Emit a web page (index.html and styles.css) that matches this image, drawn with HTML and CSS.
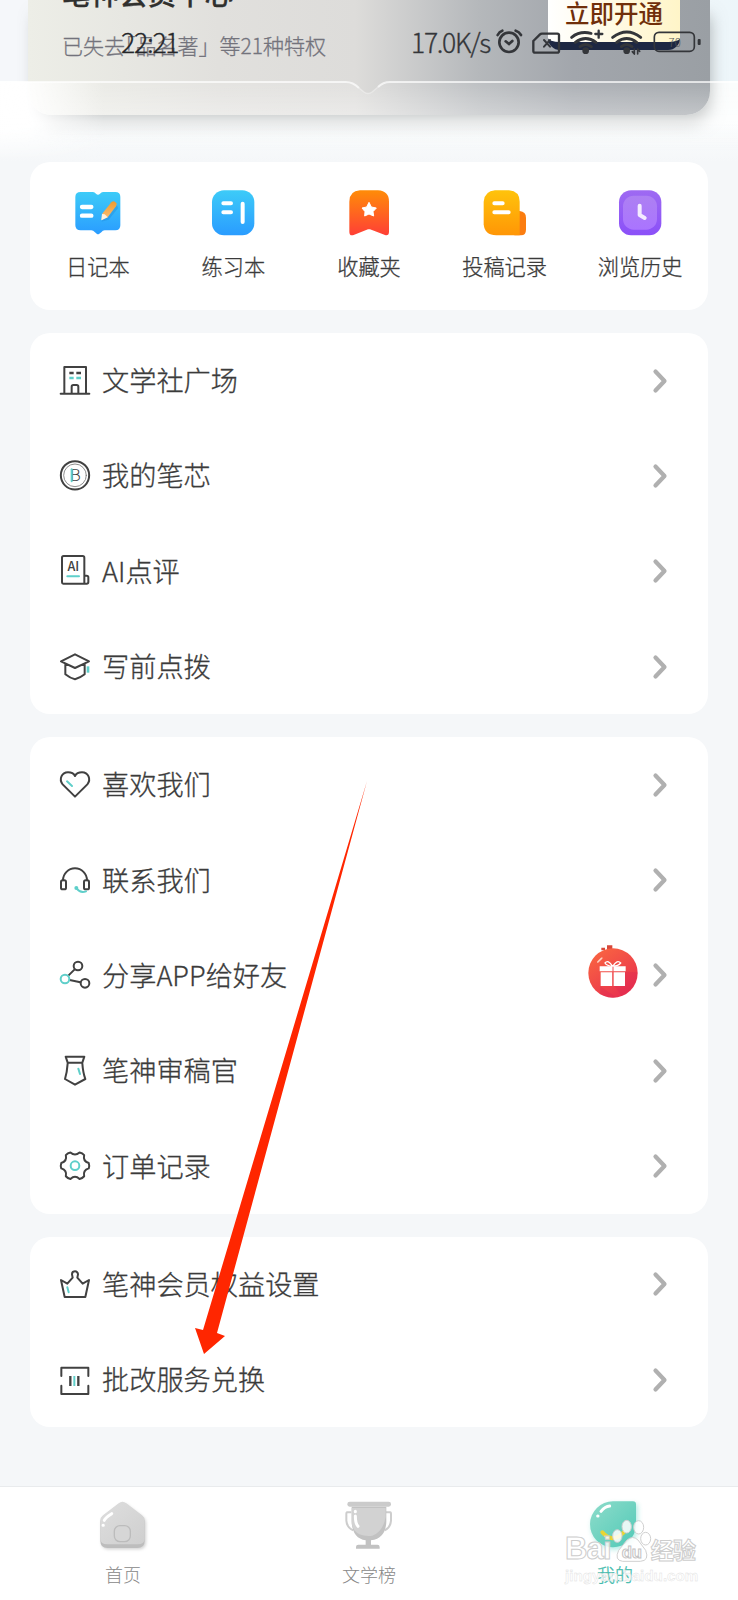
FILE: index.html
```html
<!DOCTYPE html>
<html lang="zh-CN">
<head>
<meta charset="utf-8">
<title>我的</title>
<link rel="stylesheet" href="styles.css">
</head>
<body>
<div class="screen">
  <header class="hero">
    <div class="member">
      <div class="member-title">笔神会员中心</div>
      <div class="member-sub"><span class="tight">已失去「品名著</span>」等21种特权</div>
      <div class="member-btn">立即开通</div>
    </div>
    <svg class="veil" viewBox="0 0 738 80">
      <defs>
        <linearGradient id="veil" x1="0" y1="0" x2="0" y2="1"><stop offset="0" stop-color="#fff" stop-opacity=".12"/><stop offset=".42" stop-color="#fff" stop-opacity=".4"/><stop offset=".5" stop-color="#fff" stop-opacity=".5"/><stop offset="1" stop-color="#f5f7fa" stop-opacity="0"/></linearGradient>
        <linearGradient id="edge" x1="0" y1="0" x2="1" y2="0"><stop offset="0" stop-color="#fff"/><stop offset=".08" stop-color="#fff" stop-opacity=".9"/><stop offset=".3" stop-color="#fff" stop-opacity="0"/></linearGradient>
      </defs>
      <path fill="url(#veil)" d="M0 1H346Q353 1 359 7L364 11Q368 14 372 11L378 6Q383 1 390 1H738V80H0Z"/>
      <path fill="url(#edge)" d="M0 1H346V80H0Z"/>
      <path fill="none" stroke="#fff" stroke-opacity=".7" stroke-width="2" d="M0 1H346Q353 1 359 7M378 6Q383 1 390 1H738"/>
      <path fill="none" stroke="#fff" stroke-opacity=".35" stroke-width="1.500" d="M359 7L364 11Q368 14 372 11L378 6"/>
    </svg>
    <div class="status">
      <span class="time">22:21</span>
      <span class="speed">17.0K/s</span>
      <svg class="status-icons" viewBox="0 0 618 84">
        <g fill="none" stroke="#34363a" stroke-width="8" stroke-linecap="round">
          <circle cx="39" cy="43" r="29"/><path d="M29 40L39 48L49 39M5 21Q10 11 19 8M59 8Q69 11 75 21"/>
          <path stroke-width="7" d="M112 39L132 19Q134 17 138 17H184Q189 17 189 22V69Q189 74 184 74H117Q112 74 112 69Z"/><path stroke-width="6" d="M144 36L162 56M162 36L144 56"/>
          <path stroke-width="9" d="M227 28Q252 8 285 16M238 43Q269 20 300 43M252 56Q269 43 286 56M350 28Q393 -4 434 28M362 43Q392 20 422 43M376 56Q392 43 408 56"/>
          <path stroke-width="7" d="M298 18H319M308 8V29"/><path stroke-width="5" d="M415 63V78M425 63V78M409 71L415 78M431 70L425 64"/>
          <rect x="475" y="13" width="120" height="57" rx="14" stroke-width="5"/>
        </g>
        <g fill="#34363a"><circle cx="269" cy="68" r="10"/><circle cx="392" cy="68" r="10"/><rect x="605" y="33" width="9" height="18" rx="3"/></g>
        <text class="battery" x="536" y="57" text-anchor="middle">70</text>
      </svg>
    </div>
  </header>

  <main class="cards">
    <section class="card shortcuts">
      <div class="shortcut">
        <svg viewBox="0 0 144 144">
          <defs><linearGradient id="sky" x1="0" y1="0" x2="0" y2="1"><stop stop-color="#3dcbf8"/><stop offset="1" stop-color="#2a9cff"/></linearGradient><linearGradient id="pen" x1="0" y1="0" x2="0" y2="1"><stop stop-color="#ef9b2c"/><stop offset="1" stop-color="#fcc07a"/></linearGradient></defs>
          <path fill="url(#sky)" d="M20 9H57Q62 9 66 14Q72 20 78 14Q82 9 87 9H124Q139 9 139 24V109Q139 124 124 124H92Q86 124 82 130L75 135Q72 137 69 135L62 129Q58 124 52 124H20Q4 124 4 109V24Q4 9 20 9Z"/>
          <path stroke="#fff" stroke-width="13" stroke-linecap="round" d="M24 54H52M24 80H52"/>
          <path fill="#2389d8" opacity=".4" d="M122 48L130 50L132 58L104 92L82 98Z"/>
          <path fill="url(#pen)" d="M112 40Q117 34 123 38L127 43Q129 48 126 52L101 85L83 93L84 75Z"/>
          <path fill="#fff1df" d="M84 75L92 76L101 85L82 94Z"/>
        </svg>
        <span>日记本</span>
      </div>
      <div class="shortcut">
        <svg viewBox="0 0 144 144">
          <rect x="9" y="4" width="127" height="135" rx="36" fill="url(#sky)"/>
          <path stroke="#fff" stroke-width="12" stroke-linecap="round" d="M43 43H66M43 70H66M101 44V99"/>
        </svg>
        <span>练习本</span>
      </div>
      <div class="shortcut">
        <svg viewBox="0 0 144 144">
          <defs><linearGradient id="fire" x1="0" y1="0" x2="0" y2="1"><stop stop-color="#ff8c08"/><stop offset="1" stop-color="#ff3f36"/></linearGradient></defs>
          <path fill="url(#fire)" d="M45 4H99Q132 6 132 38V128Q132 141 120 138L75 121Q72 120 69 121L26 138Q13 142 13 128V38Q13 6 45 4Z"/>
          <path fill="#fff" stroke="#fff" stroke-width="3" stroke-linejoin="round" d="M72 40L79 54L94 57L84 68L86 81L72 75L59 81L60 68L51 57L65 54Z"/>
        </svg>
        <span>收藏夹</span>
      </div>
      <div class="shortcut">
        <svg viewBox="0 0 144 144">
          <defs><linearGradient id="gold" x1="0" y1="0" x2="0" y2="1"><stop stop-color="#ffc30b"/><stop offset="1" stop-color="#ff9606"/></linearGradient></defs>
          <path fill="#fb7d10" d="M108 66H116Q135 68 135 86V122Q135 139 120 139H100Z"/>
          <path fill="url(#gold)" d="M42 4H84Q116 7 116 38V139H46Q11 139 8 106V38Q11 6 42 4Z"/>
          <path stroke="#fff" stroke-width="12" stroke-linecap="round" d="M40 43H65M40 70H83"/>
        </svg>
        <span>投稿记录</span>
      </div>
      <div class="shortcut">
        <svg viewBox="0 0 144 144">
          <defs><linearGradient id="violet" x1="0" y1="0" x2="0" y2="1"><stop stop-color="#9e6af2"/><stop offset="1" stop-color="#8b50f8"/></linearGradient><linearGradient id="lilac" x1="0" y1="0" x2="0" y2="1"><stop stop-color="#ad80f2"/><stop offset="1" stop-color="#aa74ff"/></linearGradient></defs>
          <rect x="9" y="4" width="127" height="135" rx="36" fill="url(#violet)"/>
          <rect x="21" y="20" width="102" height="102" rx="32" fill="url(#lilac)"/>
          <path fill="none" stroke="#f4ecff" stroke-width="12" stroke-linecap="round" stroke-linejoin="round" d="M71 50V78L86 87"/>
        </svg>
        <span>浏览历史</span>
      </div>
    </section>

    <section class="card">
      <div class="row">
        <svg class="icon" viewBox="0 0 90 90"><path d="M2 83H88M13 83V3H78V83M35 83V62Q35 57 40 57H50Q55 57 55 62V83"/><path stroke-width="7" stroke-linecap="butt" d="M28 21H41M49 21H63"/><path class="teal" stroke-width="7" stroke-linecap="butt" d="M28 36H41M49 36H63"/></svg>
        <span>文学社广场</span><svg class="chev" viewBox="0 0 14 24"><path d="M2.500 2.500L11.500 12L2.500 21.500"/></svg>
      </div>
      <div class="row">
        <svg class="icon" viewBox="0 0 90 90"><circle cx="45" cy="43" r="42.500"/><circle cx="45" cy="43" r="34" stroke-width="2.500" stroke="#777"/><text x="46" y="61" text-anchor="middle" font-size="50">B</text><path class="teal" d="M35 25V61"/></svg>
        <span>我的笔芯</span><svg class="chev" viewBox="0 0 14 24"><path d="M2.500 2.500L11.500 12L2.500 21.500"/></svg>
      </div>
      <div class="row">
        <svg class="icon" viewBox="0 0 90 90"><path d="M73 83H10Q6 83 6 79V5Q6 0 11 0H68Q73 0 73 5ZM73 59H80Q85 59 85 64V78Q85 83 80 83H73"/><text x="40" y="46" text-anchor="middle" font-size="38" font-weight="500">AI</text><path class="teal" d="M22 61H57"/></svg>
        <span>AI点评</span><svg class="chev" viewBox="0 0 14 24"><path d="M2.500 2.500L11.500 12L2.500 21.500"/></svg>
      </div>
      <div class="row">
        <svg class="icon" viewBox="0 0 90 90"><path d="M45 7L87 28L45 48L3 28ZM16 37V67Q31 79 45 82Q60 78 74 67V37"/><path class="teal" stroke-width="8" stroke-linecap="butt" d="M84 43V62"/></svg>
        <span>写前点拨</span><svg class="chev" viewBox="0 0 14 24"><path d="M2.500 2.500L11.500 12L2.500 21.500"/></svg>
      </div>
    </section>

    <section class="card">
      <div class="row">
        <svg class="icon" viewBox="0 0 90 90"><path d="M45 80L8 43C-4 28 5 7 24 7C35 7 42 12 45 18C48 12 55 7 66 7C85 7 94 28 82 43Z"/><path class="teal" d="M21 34L36 48"/></svg>
        <span>喜欢我们</span><svg class="chev" viewBox="0 0 14 24"><path d="M2.500 2.500L11.500 12L2.500 21.500"/></svg>
      </div>
      <div class="row">
        <svg class="icon" viewBox="0 0 90 90"><path d="M9 46A36 36 0 0 1 81 46"/><rect x="3" y="46" width="15" height="27" rx="5"/><rect x="72" y="46" width="15" height="27" rx="5"/><circle cx="49" cy="69" r="6" fill="#5fcfca" stroke="none"/><path class="teal" d="M50 71Q61 85 78 79"/></svg>
        <span>联系我们</span><svg class="chev" viewBox="0 0 14 24"><path d="M2.500 2.500L11.500 12L2.500 21.500"/></svg>
      </div>
      <div class="row">
        <svg class="icon" viewBox="0 0 90 90"><path d="M44 28L25 47M29 60L61 67"/><circle cx="54" cy="18" r="13"/><circle cx="75" cy="70" r="13"/><circle class="teal" cx="15" cy="57" r="13"/></svg>
        <span>分享APP给好友</span>
        <svg class="gift" viewBox="0 0 150 162">
          <defs><linearGradient id="gift" x1="0" y1="0" x2=".7" y2="1"><stop stop-color="#fb6a40"/><stop offset="1" stop-color="#e8304e"/></linearGradient></defs>
          <path fill="#d8483a" d="M40 8H51V16H40ZM57 1H73V12H57Z"/><circle cx="75" cy="84" r="74" fill="url(#gift)"/>
          <path fill="#d92555" opacity=".3" d="M37 124L84 157Q60 162 37 148ZM111 80L148 82Q145 130 100 153L80 123H111Z"/>
          <path fill="#fff" d="M35 64H113V79H35ZM38 82H73V123H38ZM76 82H111V123H76Z"/>
          <path fill="#ffd0bf" d="M27 50L38 39Q45 34 43 41L32 52Q27 56 27 50Z"/>
          <path fill="none" stroke="#fff" stroke-width="4" d="M74 64Q56 63 51 54Q60 42 74 64Q88 42 98 54Q91 63 74 64"/><path stroke="#ef5054" stroke-width="3" d="M75 65V123"/>
        </svg>
        <svg class="chev" viewBox="0 0 14 24"><path d="M2.500 2.500L11.500 12L2.500 21.500"/></svg>
      </div>
      <div class="row">
        <svg class="icon" viewBox="0 0 90 90"><path d="M17 2H73L67 20H23ZM23 22Q21 50 15 69L45 86L76 69Q69 50 67 22"/><path class="teal" d="M55 38L60 54"/></svg>
        <span>笔神审稿官</span><svg class="chev" viewBox="0 0 14 24"><path d="M2.500 2.500L11.500 12L2.500 21.500"/></svg>
      </div>
      <div class="row">
        <svg class="icon" viewBox="0 0 90 90"><g transform="translate(45 44)"><path d="M41.200 8Q23.400 13.500 27.500 31.700Q22 38 13.700 39.700Q0 27 -13.700 39.700Q-22 38 -27.500 31.700Q-23.400 13.500 -41.200 8Q-44 0 -41.200 -8Q-23.400 -13.500 -27.500 -31.700Q-22 -38 -13.700 -39.700Q0 -27 13.700 -39.700Q22 -38 27.500 -31.700Q23.400 -13.500 41.200 -8Q44 0 41.200 8Z"/><circle class="teal" r="13"/></g></svg>
        <span>订单记录</span><svg class="chev" viewBox="0 0 14 24"><path d="M2.500 2.500L11.500 12L2.500 21.500"/></svg>
      </div>
    </section>

    <section class="card">
      <div class="row">
        <svg class="icon" viewBox="0 0 90 90"><path d="M3 33L14 84H76L87 33L68 44L52 26Q53 21 54 16A9 9 0 1 0 36 16Q37 21 38 26L22 44Z"/><path class="teal" d="M22 55L26 70"/></svg>
        <span>笔神会员权益设置</span><svg class="chev" viewBox="0 0 14 24"><path d="M2.500 2.500L11.500 12L2.500 21.500"/></svg>
      </div>
      <div class="row">
        <svg class="icon" viewBox="0 0 90 90"><path d="M4 33V8H85V33M4 62V87H85V62"/><path stroke-width="7" stroke-linecap="butt" d="M31 33V63M55 33V63"/><path class="teal" stroke-linecap="butt" d="M43 33V63"/></svg>
        <span>批改服务兑换</span><svg class="chev" viewBox="0 0 14 24"><path d="M2.500 2.500L11.500 12L2.500 21.500"/></svg>
      </div>
    </section>
  </main>

  <nav class="tabs">
    <div class="tab">
      <svg viewBox="0 0 156 156">
        <defs><linearGradient id="grey" x1="0" y1="0" x2="1" y2="1"><stop stop-color="#dedede"/><stop offset="1" stop-color="#cfcfcf"/></linearGradient></defs>
        <path class="soft" fill="#bdbdbd" d="M65 12Q76 3 88 12L135 48Q143 54 143 64V123Q143 144 121 144H31Q10 144 10 123V64Q10 54 18 48Z"/>
        <path fill="url(#grey)" d="M65 10Q76 1 88 10L135 46Q143 52 143 62V116Q143 133 121 133H31Q10 133 10 116V62Q10 52 18 46Z"/>
        <rect x="52" y="77" width="48" height="48" rx="17" fill="#d6d6d6" stroke="#bcbcbc" stroke-width="4"/>
        <path stroke="#fff" stroke-width="9" stroke-linecap="round" fill="none" d="M22 61Q25 53 44 41M18 76H19"/>
      </svg>
      <span>首页</span>
    </div>
    <div class="tab">
      <svg viewBox="0 0 156 156">
        <path fill="none" stroke="#cdcdcd" stroke-width="6" d="M25 37H12Q10 37 10 43V62Q12 84 31 91M128 37H142Q144 37 144 43V62Q142 84 125 91"/>
        <path fill="#c2c2c2" d="M26 20H130V65Q128 116 84 121V134H103Q110 134 110 141V146H39V141Q39 134 46 134H68V121Q28 115 26 65Z"/>
        <path fill="#d2d2d2" d="M26 24H128V50Q120 96 88 107Q50 111 34 91Q26 80 26 65Z"/>
        <rect x="13" y="5" width="131" height="15" rx="7" fill="#cbcbcb"/>
        <path stroke="#fff" stroke-width="9" stroke-linecap="round" fill="none" d="M37 34V35M37 48Q37 70 45 79"/>
      </svg>
      <span>文学榜</span>
    </div>
    <div class="tab active">
      <svg viewBox="0 0 156 156">
        <defs><linearGradient id="leaf" x1="0" y1="0" x2="1" y2="1"><stop stop-color="#8edcca"/><stop offset="1" stop-color="#50c9b7"/></linearGradient></defs>
        <path class="leaf" fill="url(#leaf)" d="M72 4H132Q141 4 141 13V76A69 69 0 1 1 72 4Z"/>
        <path stroke="#e9d534" stroke-width="12" stroke-linecap="round" fill="none" d="M40 97Q69 132 104 97"/>
        <path stroke="#fff" stroke-width="9" stroke-linecap="round" fill="none" d="M36 34Q48 19 62 18M26 48H27"/>
      </svg>
      <span>我的</span>
    </div>
  </nav>

  <div class="watermark">
    <div class="wm-top"><span>Bai</span>
      <svg viewBox="0 0 120 126"><g fill="#fff" fill-opacity=".85" stroke="#d0d0d0" stroke-width="3"><ellipse cx="19" cy="48" rx="14" ry="19"/><ellipse cx="47" cy="20" rx="14" ry="19"/><ellipse cx="83" cy="22" rx="15" ry="20"/><ellipse cx="104" cy="56" rx="15" ry="19"/><path d="M48 60Q65 45 81 60L104 91Q116 122 88 124H35Q9 121 23 91Z"/></g><text x="62" y="113" text-anchor="middle">du</text></svg>
      <span class="wm-cn">经验</span></div>
    <div class="wm-url">jingyan.baidu.com</div>
  </div>
  <svg class="arrow" viewBox="0 0 738 1600"><path fill="#ff2600" d="M367 781L217 1333L225 1336L204 1354L195 1328L203 1330Z"/></svg>
</div>
</body>
</html>
```
FILE: styles.css
```css
* { box-sizing: border-box; }
body {
  margin: 0;
  font-family: "Noto Sans CJK SC", sans-serif;
  font-weight: 300;
  color: #3b3b3b;
}
.screen {
  position: relative;
  width: 738px;
  height: 1600px;
  overflow: hidden;
  display: flex;
  flex-direction: column;
  background: #f5f7f9;
}
svg { display: block; overflow: visible; flex: none; }

.hero {
  position: relative;
  height: 162px;
  flex: none;
  background: linear-gradient(90deg, #f5f7fa 85%, #edf6fa);
}
.hero::before {
  content: "";
  position: absolute;
  inset: 81px 0 0;
  background: linear-gradient(#fbfdfd 0 50%, #f5f7f9);
}
.member {
  position: relative;
  width: 682px;
  height: 115px;
  margin-left: 28px;
  border-radius: 0 0 24px 24px;
  background: linear-gradient(90deg, #edeee7, #e1e0dd 28%, #dddcda 48%, #b5b8bb 66%, #a2a6ac 80%, #9a9fa4);
  box-shadow: 4px 12px 16px -4px rgba(100, 105, 105, .5);
}
.member-title {
  position: absolute;
  left: 34px;
  top: -27px;
  font-size: 28.500px;
  line-height: 40px;
  font-weight: 500;
  color: #30302e;
  -webkit-text-stroke: .3px currentColor;
}
.member-sub {
  position: absolute;
  left: 34px;
  top: 30px;
  font-size: 21px;
  line-height: 30px;
  color: #73737c;
  white-space: nowrap;
  -webkit-text-stroke: .3px currentColor;
}
.tight { font-feature-settings: "halt"; }
.member-btn {
  position: absolute;
  left: 520px;
  top: 0;
  width: 132px;
  height: 50px;
  border-bottom: 8px solid #1d2742;
  border-radius: 0 0 12px 12px;
  background: linear-gradient(90deg, #fff, #fff5c8);
  font-size: 24.500px;
  line-height: 25px;
  font-weight: 500;
  text-align: center;
  color: #702f0a;
}
.veil {
  position: absolute;
  left: 0;
  top: 81px;
  width: 738px;
  height: 80px;
  -webkit-mask-image: linear-gradient(#000 55%, transparent);
  mask-image: linear-gradient(#000 55%, transparent);
}
.status {
  position: absolute;
  inset: 23px 0 auto 0;
  height: 38px;
  display: flex;
  align-items: center;
  color: #25272a;
  font-size: 26.500px;
  line-height: 38px;
  -webkit-text-stroke: .3px currentColor;
}
.time { margin-left: 121px; width: 290px; letter-spacing: -1.200px; }
.speed { width: 85px; white-space: nowrap; letter-spacing: -1.300px; color: #34363a; }
.status-icons { width: 206px; height: 28px; }
.battery { font-size: 34px; fill: #55575a; }

.cards { display: flex; flex-direction: column; gap: 23px; padding: 0 30px; flex: 1; -webkit-text-stroke: .3px currentColor; }
.card { background: #fff; border-radius: 20px; flex: none; }
.shortcuts { display: flex; height: 148px; }
.shortcut {
  flex: 1;
  padding-top: 27px;
  display: flex;
  flex-direction: column;
  align-items: center;
  font-size: 21.200px;
  line-height: 30px;
}
.shortcut svg { width: 48px; height: 48px; margin-bottom: 14px; }
.row {
  height: 95.300px;
  padding: 0 41px 0 30px;
  display: flex;
  align-items: center;
  font-size: 27.200px;
  line-height: 40px;
}
.row span { margin: -3px auto 0 12px; white-space: nowrap; }
.icon { width: 30px; height: 30px; fill: none; stroke: #414141; stroke-width: 6; stroke-linecap: round; stroke-linejoin: round; }
.icon .teal { stroke: #5fcfca; }
.icon text { fill: #414141; stroke: none; }
.chev { width: 14px; height: 24px; fill: none; stroke: #b0b0b0; stroke-width: 4.200; stroke-linecap: round; stroke-linejoin: round; }
.gift { width: 50px; height: 54px; margin: -6px 15px 0 0; }

.tabs {
  height: 114px;
  flex: none;
  display: flex;
  background: #fff;
  border-top: 1px solid #e9ebed;
}
.tab {
  flex: 1;
  padding-top: 13px;
  display: flex;
  flex-direction: column;
  align-items: center;
  font-size: 18px;
  line-height: 26px;
  color: #888;
}
.tab svg { width: 52px; height: 52px; margin-bottom: 9px; }
.active { color: #45bcae; -webkit-text-stroke: .3px currentColor; }
.soft { filter: drop-shadow(4px 4px 5px rgba(0, 0, 0, .18)); }
.leaf { filter: drop-shadow(5px 7px 8px rgba(80, 210, 195, .45)); }

.watermark {
  position: absolute;
  left: 565px;
  top: 1519px;
  width: 140px;
  font-family: "Liberation Sans", sans-serif;
  color: rgba(255, 255, 255, .82);
  -webkit-text-stroke: 1px #cdcdcd;
}
.wm-top { display: flex; align-items: flex-end; height: 45px; font-size: 31px; font-weight: 700; line-height: 30px; letter-spacing: -.8px; }
.wm-top svg { width: 40px; height: 42px; margin-bottom: 2px; }
.wm-top text { font-size: 50px; font-weight: 700; fill: #fff; stroke: #c4c4c4; stroke-width: 3px; -webkit-text-stroke: 0; }
.wm-cn { font-family: "Noto Sans CJK SC", sans-serif; font-size: 23px; white-space: nowrap; }
.wm-url { font-size: 15.200px; line-height: 23px; font-weight: 700; -webkit-text-stroke: .4px #ddd; }
.arrow { position: absolute; left: 0; top: 0; width: 738px; height: 1600px; pointer-events: none; }
```
